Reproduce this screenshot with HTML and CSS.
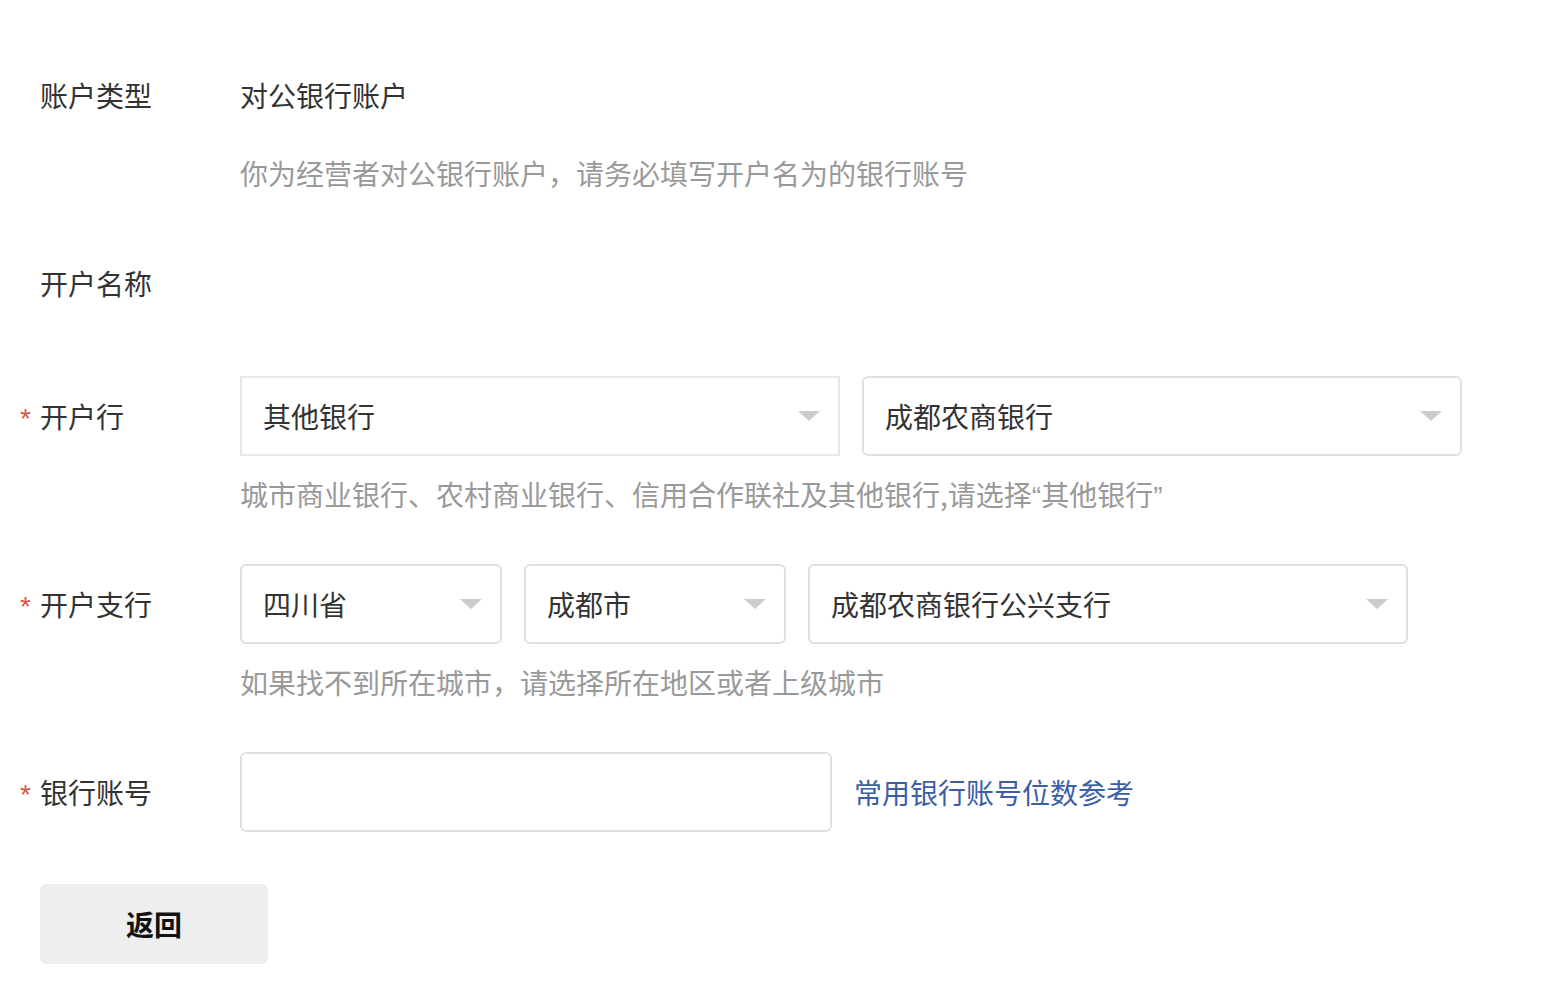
FILE: index.html
```html
<!DOCTYPE html>
<html lang="zh-CN">
<head>
    <meta charset="UTF-8">
    <meta name="viewport" content="width=device-width, initial-scale=1.0">
    <title>银行账户信息</title>
    <link rel="stylesheet" href="styles.css">
</head>
<body>
    <div class="form">
        <div class="form-item plain">
            <div class="label"><span class="star"></span>账户类型</div>
            <div class="content">
                <div class="value">对公银行账户</div>
                <div class="hint hint-gap">你为经营者对公银行账户，请务必填写开户名为的银行账号</div>
            </div>
        </div>

        <div class="form-item plain last-plain">
            <div class="label"><span class="star"></span>开户名称</div>
            <div class="content">
                <div class="value"></div>
            </div>
        </div>

        <div class="form-item">
            <div class="label tall"><span class="star">*</span>开户行</div>
            <div class="content">
                <div class="controls">
                    <div class="select wide square"><span>其他银行</span><i class="arrow"></i></div>
                    <div class="select wide"><span>成都农商银行</span><i class="arrow"></i></div>
                </div>
                <div class="hint">城市商业银行、农村商业银行、信用合作联社及其他银行,请选择<span class="quote">“</span>其他银行<span class="quote">”</span></div>
            </div>
        </div>

        <div class="form-item">
            <div class="label tall"><span class="star">*</span>开户支行</div>
            <div class="content">
                <div class="controls">
                    <div class="select small"><span>四川省</span><i class="arrow"></i></div>
                    <div class="select small"><span>成都市</span><i class="arrow"></i></div>
                    <div class="select wide"><span>成都农商银行公兴支行</span><i class="arrow"></i></div>
                </div>
                <div class="hint">如果找不到所在城市，请选择所在地区或者上级城市</div>
            </div>
        </div>

        <div class="form-item">
            <div class="label tall"><span class="star">*</span>银行账号</div>
            <div class="content">
                <div class="controls">
                    <input class="input" type="text">
                    <a class="link" href="#">常用银行账号位数参考</a>
                </div>
            </div>
        </div>

        <button class="back-btn">返回</button>
    </div>
</body>
</html>
```

FILE: styles.css
```css
body {
    margin: 0;
    background-color: #fff;
    font-family: "Noto Sans CJK SC", "Noto Sans", sans-serif;
    color: #333;
}
.form {
    padding: 75px 0 0 20px;
}
.form-item {
    display: flex;
    align-items: flex-start;
    margin-bottom: 50px;
}
.form-item.plain {
    margin-bottom: 70px;
}
.form-item.last-plain {
    margin-bottom: 73px;
}
.label {
    width: 220px;
    display: flex;
    align-items: center;
    font-size: 28px;
    line-height: 40px;
    color: #333;
}
.label.tall {
    line-height: 80px;
}
.star {
    width: 20px;
    color: #d9534f;
    font-family: "Liberation Sans", sans-serif;
    font-size: 28px;
    position: relative;
    top: 3px;
}
.content {
    display: flex;
    flex-direction: column;
}
.value {
    font-size: 28px;
    line-height: 40px;
    min-height: 40px;
    color: #333;
}
.hint {
    height: 40px;
    font-size: 28px;
    line-height: 40px;
    color: #999;
    margin-top: 18px;
}
.hint.hint-gap {
    margin-top: 38px;
}
.quote {
    font-family: "Liberation Sans", sans-serif;
    line-height: 0;
}
.controls {
    display: flex;
    align-items: center;
    gap: 22px;
}
.select {
    box-sizing: border-box;
    height: 80px;
    display: flex;
    align-items: center;
    justify-content: space-between;
    padding: 0 18px 0 21px;
    border: 2px solid #e0e0e0;
    border-radius: 6px;
    font-size: 28px;
    color: #333;
}
.select.wide {
    width: 600px;
}
.select.small {
    width: 262px;
}
.select.square {
    border-color: #e8e8ee;
    border-radius: 0;
}
.arrow {
    width: 0;
    height: 0;
    border-left: 11px solid transparent;
    border-right: 11px solid transparent;
    border-top: 10px solid #cccccc;
}
.input {
    box-sizing: border-box;
    width: 592px;
    height: 80px;
    border: 2px solid #e0e0e0;
    border-radius: 6px;
    font-size: 28px;
    outline: none;
}
.link {
    font-size: 28px;
    color: #3b5ea8;
    text-decoration: none;
}
.back-btn {
    margin: 2px 0 0 20px;
    width: 228px;
    height: 80px;
    border: none;
    border-radius: 6px;
    background-color: #eeeeee;
    font-family: "Noto Sans CJK SC", sans-serif;
    font-size: 28px;
    font-weight: bold;
    color: #111;
    cursor: pointer;
}
```
